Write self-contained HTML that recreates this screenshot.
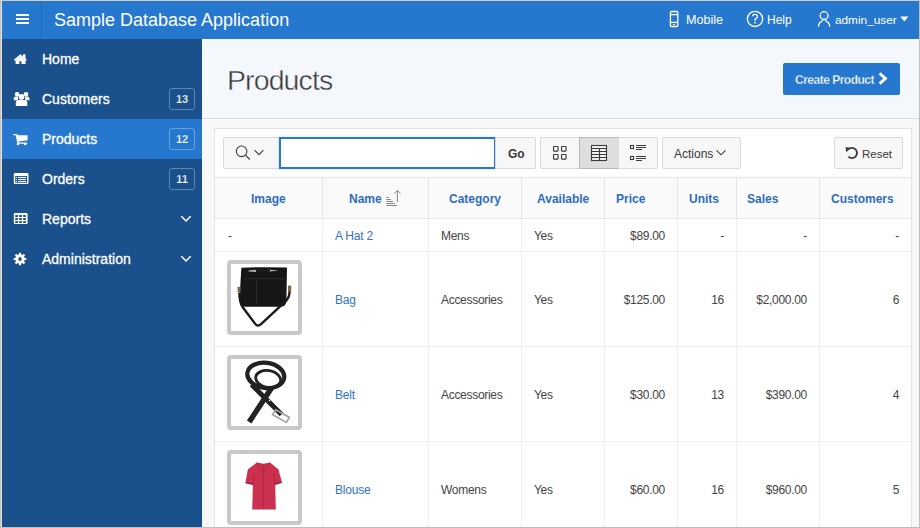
<!DOCTYPE html>
<html><head><meta charset="utf-8">
<style>
*{box-sizing:border-box;margin:0;padding:0}
html,body{width:920px;height:528px;overflow:hidden;background:#f8f8f8;font-family:"Liberation Sans",sans-serif;position:relative}
div,span,svg{position:absolute}
.t{white-space:nowrap;line-height:14px}
#hdr{left:2px;top:1px;width:917px;height:38px;background:#2678cf}
#burger{left:41px;top:1px;width:1px;height:38px;background:#1f69b9}
.bar{left:16px;width:12.5px;height:2px;background:#fff}
#side{left:2px;top:39px;width:200px;height:488px;background:#1a508c}
.sel{left:2px;top:119px;width:200px;height:40px;background:#2678cf}
.lbl{left:42px;color:#fff;font-size:14px;-webkit-text-stroke:0.3px #fff}
.badge{left:169px;width:26px;height:22px;border:1px solid rgba(255,255,255,.3);border-radius:3px;font-size:11px;font-weight:bold;text-align:center;line-height:20px;color:#fff}
#titlebar{left:202px;top:39px;width:717px;height:79px;background:#f4f8fd}
#tbline{left:202px;top:118px;width:717px;height:1px;background:#d9dadd}
#region{left:214px;top:128px;width:698px;height:400px;background:#fff;border:1px solid #e3e3e3}
.btn{top:137px;height:32px;background:#f7f7f7;border:1px solid #dadada;border-radius:2px}
.hl{height:1px;background:#efefef}
.vl{width:1px;background:#e8e8e8}
.th{color:#2e6dbe;font-weight:bold;font-size:12px}
.td{color:#444;font-size:12px;letter-spacing:-0.3px}
.lnk{color:#3472c2;font-size:12px;letter-spacing:-0.2px}
.img{width:75px;height:75px;border:4px solid #c8c8c8;border-radius:4px;background:#fff;left:227px}
</style></head><body>
<!-- header -->
<div id="hdr"></div>
<div id="burger"></div>
<div class="bar" style="top:14px"></div><div class="bar" style="top:18px"></div><div class="bar" style="top:22px"></div>
<div class="t" style="left:54px;top:11px;font-size:18px;line-height:18px;color:#fff">Sample Database Application</div>
<div class="t" style="left:686px;top:13px;font-size:12.6px;color:#fff">Mobile</div>
<div class="t" style="left:767px;top:13px;font-size:12px;color:#fff">Help</div>
<div class="t" style="left:835px;top:13px;font-size:11.8px;color:#fff">admin_user</div>

<!-- side -->
<div id="side"></div>
<div class="sel"></div>
<div class="t lbl" style="top:52px">Home</div>
<div class="t lbl" style="top:92px">Customers</div>
<div class="t lbl" style="top:132px">Products</div>
<div class="t lbl" style="top:172px">Orders</div>
<div class="t lbl" style="top:212px">Reports</div>
<div class="t lbl" style="top:252px">Administration</div>
<div class="badge" style="top:88px;-webkit-text-stroke:0.25px #1a508c">13</div>
<div class="badge" style="top:128px;-webkit-text-stroke:0.25px #2678cf">12</div>
<div class="badge" style="top:168px;-webkit-text-stroke:0.25px #1a508c">11</div>

<!-- title -->
<div id="titlebar"></div><div id="tbline"></div>
<div class="t" style="left:227px;top:64px;font-size:28.5px;line-height:32px;letter-spacing:-0.9px;color:#383838;-webkit-text-stroke:0.45px #f4f8fd">Products</div>
<div style="left:783px;top:63px;width:117px;height:32px;background:#2678cf;border-radius:2px"></div>
<div class="t" style="left:795px;top:73px;font-size:12px;color:#fff;font-weight:bold;letter-spacing:-0.5px;-webkit-text-stroke:0.3px #2678cf">Create Product</div>

<!-- region -->
<div id="region"></div>
<div class="btn" style="left:223px;width:57px"></div>
<div style="left:279px;top:137px;width:217px;height:32px;border:2px solid #2678cf;background:#fff;box-shadow:0 0 2px 1px rgba(38,120,207,.12)"></div>
<div class="btn" style="left:495px;width:41px;border-radius:0 2px 2px 0"></div>
<div class="t" style="left:508px;top:147px;font-size:12px;font-weight:bold;color:#383838">Go</div>
<div class="btn" style="left:540px;width:40px;border-radius:2px 0 0 2px"></div>
<div class="btn" style="left:579px;width:40px;border-radius:0;background:#dedede;border-color:#b8b8b8"></div>
<div class="btn" style="left:618px;width:40px;border-radius:0 2px 2px 0"></div>
<div class="btn" style="left:662px;width:79px"></div>
<div class="t" style="left:674px;top:147px;font-size:12px;color:#383838">Actions</div>
<div class="btn" style="left:834px;width:69px"></div>
<div class="t" style="left:862px;top:147px;font-size:11.5px;color:#383838">Reset</div>

<!-- table -->
<div style="left:215px;top:178px;width:696px;height:40px;background:#fafafa"></div>
<div class="hl" style="left:215px;top:177px;width:696px;background:#e3e3e3"></div>
<div class="hl" style="left:215px;top:218px;width:696px;background:#eaeaea"></div>
<div class="hl" style="left:215px;top:251px;width:696px"></div>
<div class="hl" style="left:215px;top:346px;width:696px"></div>
<div class="hl" style="left:215px;top:441px;width:696px"></div>
<div class="vl" style="left:322px;top:178px;height:40px;background:#e4e4e4"></div><div class="vl" style="left:428px;top:178px;height:40px;background:#e4e4e4"></div><div class="vl" style="left:521px;top:178px;height:40px;background:#e4e4e4"></div><div class="vl" style="left:604px;top:178px;height:40px;background:#e4e4e4"></div><div class="vl" style="left:677px;top:178px;height:40px;background:#e4e4e4"></div><div class="vl" style="left:736px;top:178px;height:40px;background:#e4e4e4"></div><div class="vl" style="left:819px;top:178px;height:40px;background:#e4e4e4"></div><div class="vl" style="left:322px;top:219px;height:308px;background:#efefef"></div><div class="vl" style="left:428px;top:219px;height:308px;background:#efefef"></div><div class="vl" style="left:521px;top:219px;height:308px;background:#efefef"></div><div class="vl" style="left:604px;top:219px;height:308px;background:#efefef"></div><div class="vl" style="left:677px;top:219px;height:308px;background:#efefef"></div><div class="vl" style="left:736px;top:219px;height:308px;background:#efefef"></div><div class="vl" style="left:819px;top:219px;height:308px;background:#efefef"></div>

<div class="t th" style="left:251px;top:192px">Image</div>
<div class="t th" style="left:349px;top:192px">Name</div>
<div class="t th" style="left:449px;top:192px">Category</div>
<div class="t th" style="left:537px;top:192px">Available</div>
<div class="t th" style="left:616px;top:192px">Price</div>
<div class="t th" style="left:689px;top:192px">Units</div>
<div class="t th" style="left:747px;top:192px">Sales</div>
<div class="t th" style="left:831px;top:192px">Customers</div>

<!-- row1 -->
<div class="t td" style="left:228px;top:229px">-</div>
<div class="t lnk" style="left:335px;top:229px">A Hat 2</div>
<div class="t td" style="left:441px;top:229px">Mens</div>
<div class="t td" style="left:534px;top:229px">Yes</div>
<div class="t td" style="right:255px;top:229px">$89.00</div>
<div class="t td" style="right:196px;top:229px">-</div>
<div class="t td" style="right:113px;top:229px">-</div>
<div class="t td" style="right:21px;top:229px">-</div>
<!-- row2 -->
<div class="img" style="top:260px"></div>
<div class="t lnk" style="left:335px;top:293px">Bag</div>
<div class="t td" style="left:441px;top:293px">Accessories</div>
<div class="t td" style="left:534px;top:293px">Yes</div>
<div class="t td" style="right:255px;top:293px">$125.00</div>
<div class="t td" style="right:196px;top:293px">16</div>
<div class="t td" style="right:113px;top:293px">$2,000.00</div>
<div class="t td" style="right:21px;top:293px">6</div>
<!-- row3 -->
<div class="img" style="top:355px"></div>
<div class="t lnk" style="left:335px;top:388px">Belt</div>
<div class="t td" style="left:441px;top:388px">Accessories</div>
<div class="t td" style="left:534px;top:388px">Yes</div>
<div class="t td" style="right:255px;top:388px">$30.00</div>
<div class="t td" style="right:196px;top:388px">13</div>
<div class="t td" style="right:113px;top:388px">$390.00</div>
<div class="t td" style="right:21px;top:388px">4</div>
<!-- row4 -->
<div class="img" style="top:450px"></div>
<div class="t lnk" style="left:335px;top:483px">Blouse</div>
<div class="t td" style="left:441px;top:483px">Womens</div>
<div class="t td" style="left:534px;top:483px">Yes</div>
<div class="t td" style="right:255px;top:483px">$60.00</div>
<div class="t td" style="right:196px;top:483px">16</div>
<div class="t td" style="right:113px;top:483px">$960.00</div>
<div class="t td" style="right:21px;top:483px">5</div>

<svg style="left:0;top:0" width="920" height="528" viewBox="0 0 920 528">
<!-- sidebar icons -->
<g fill="#fff">
  <!-- home -->
  <path d="M13.8 59.8 L20.3 54.2 L26.9 59.8 L25.6 60.9 L20.3 56.4 L15.1 60.9 Z"/>
  <path d="M22.9 54.2 h2.6 v4.8 l-2.6 -2.3 z"/>
  <path d="M15.6 60.4 L20.3 56.6 L25.6 60.6 V64 H21.4 V61.2 H19.4 V64 H15.6 Z"/>
  <!-- users -->
  <circle cx="17.1" cy="94.2" r="2.3"/>
  <circle cx="26" cy="94.2" r="2.3"/>
  <circle cx="21.5" cy="96.9" r="2.8"/>
  <path d="M13.8 100.3 v-2.3 q0-1.6 1.6-1.6 h3 q-0.8 1.4 -0.4 3.9 z"/>
  <path d="M29.4 100.3 v-2.3 q0-1.6 -1.6-1.6 h-3 q0.8 1.4 0.4 3.9 z"/>
  <path d="M15.8 106 v-3.2 q0-2.8 2.8-2.8 h5.9 q2.8 0 2.8 2.8 v3.2 z"/>
  <!-- cart -->
  <path d="M13.3 134 h3.8 l0.5 1.2 h10 v5 l-9.2 1.4 l0.3 0.9 h8.6 v1.3 h-9.8 l-1.9 -8.5 h-2.3 z"/>
  <rect x="16.8" y="143.2" width="2.3" height="1.9"/>
  <rect x="24" y="143.2" width="2.3" height="1.9"/>
  <!-- orders list-alt -->
  <path fill-rule="evenodd" d="M15 173 h12.3 q1.2 0 1.2 1.2 v8.6 q0 1.2 -1.2 1.2 h-12.3 q-1.2 0 -1.2 -1.2 v-8.6 q0 -1.2 1.2 -1.2 z M15.2 176 v6.8 h11.9 v-6.8 z"/>
  <rect x="15.8" y="176.9" width="1.2" height="1"/><rect x="18" y="176.9" width="8" height="1"/>
  <rect x="15.8" y="178.9" width="1.2" height="1"/><rect x="18" y="178.9" width="8" height="1"/>
  <rect x="15.8" y="180.9" width="1.2" height="1"/><rect x="18" y="180.9" width="8" height="1"/>
  <!-- reports table -->
  <path fill-rule="evenodd" d="M14.9 213.1 h11.6 q1.1 0 1.1 1.1 v8.7 q0 1.1 -1.1 1.1 h-11.6 q-1.1 0 -1.1 -1.1 v-8.7 q0 -1.1 1.1 -1.1 z
   M15.3 215 h2.6 v2 h-2.6z M19.2 215 h2.6 v2 h-2.6z M23.2 215 h2.6 v2 h-2.6z
   M15.3 218 h2.6 v2 h-2.6z M19.2 218 h2.6 v2 h-2.6z M23.2 218 h2.6 v2 h-2.6z
   M15.3 221 h2.6 v2 h-2.6z M19.2 221 h2.6 v2 h-2.6z M23.2 221 h2.6 v2 h-2.6z"/>
  <!-- cog -->
  <path fill-rule="evenodd" d="M18.88 254.33 L19.00 252.68 L21.00 252.68 L21.12 254.33 L22.51 254.91 L23.76 253.82 L25.18 255.24 L24.09 256.49 L24.67 257.88 L26.32 258.00 L26.32 260.00 L24.67 260.12 L24.09 261.51 L25.18 262.76 L23.76 264.18 L22.51 263.09 L21.12 263.67 L21.00 265.32 L19.00 265.32 L18.88 263.67 L17.49 263.09 L16.24 264.18 L14.82 262.76 L15.91 261.51 L15.33 260.12 L13.68 260.00 L13.68 258.00 L15.33 257.88 L15.91 256.49 L14.82 255.24 L16.24 253.82 L17.49 254.91 Z M21.70 259 A1.7 2 0 1 0 18.30 259 A1.7 2 0 1 0 21.70 259 Z"/>
  <!-- chevrons -->
</g>
<g fill="none" stroke="#fff" stroke-width="1.5">
  <path d="M181.3 216.3 L186 221 L190.7 216.3"/>
  <path d="M181.3 256.3 L186 261 L190.7 256.3"/>
</g>
<!-- header icons -->
<g fill="none" stroke="#fff" stroke-width="1.3">
  <rect x="670.4" y="11.5" width="7.4" height="15" rx="1"/>
  <line x1="670.4" y1="14.6" x2="677.8" y2="14.6"/>
  <line x1="670.4" y1="22.4" x2="677.8" y2="22.4"/>
  <circle cx="755" cy="18.9" r="7.6"/>
  <circle cx="824.1" cy="15.6" r="3.9"/>
  <path d="M818.5 26.8 Q818.4 22.6 821.8 21.3 L822.9 19.9 M829.7 26.8 Q829.8 22.6 826.4 21.3 L825.3 19.9"/>
  <path d="M752.6 16.3 q0.2 -1.9 2.4 -1.9 q2.4 0 2.4 2 q0 1.3 -1.3 2 q-1.1 0.6 -1.1 1.8 v0.8"/>
</g>
<rect x="673.2" y="24" width="1.8" height="1" fill="#fff"/>
<rect x="754.2" y="22" width="1.6" height="1.5" fill="#fff"/>
<path d="M900.2 16.6 h8.2 l-4.1 5 z" fill="#fff"/>
<path d="M879.6 73.4 L885.4 78.5 L879.6 83.6" fill="none" stroke="#fff" stroke-width="2.9"/>
<!-- toolbar icons -->
<g fill="none" stroke="#3a3a3a" stroke-width="1.1">
  <circle cx="241.6" cy="151.3" r="5.3"/>
  <path d="M245.5 155.2 L249.8 159.5"/>
  <path d="M254.6 150.2 L259 154.6 L263.4 150.2"/>
  <rect x="553.5" y="146.5" width="4.6" height="4.6" rx="0.6"/>
  <rect x="561.5" y="146.5" width="4.6" height="4.6" rx="0.6"/>
  <rect x="553.5" y="154.5" width="4.6" height="4.6" rx="0.6"/>
  <rect x="561.5" y="154.5" width="4.6" height="4.6" rx="0.6"/>
  <rect x="591.5" y="145.5" width="15" height="15" fill="#f2f2f2"/>
  <path d="M591.5 148.5 h15 M591.5 151.5 h15 M591.5 154.5 h15 M591.5 157.5 h15 M599.5 148.5 v12"/>
  <rect x="630.5" y="145.5" width="3" height="3"/>
  <rect x="630.5" y="156.5" width="3" height="3"/>
  <path d="M636 145.5 h10 M636 147.5 h10 M636 149.5 h6 M636 156.5 h10 M636 158.5 h10 M636 160.5 h6"/>
  <path d="M716.5 150.3 L721 154.8 L725.5 150.3"/>
  <path d="M848.3 149.4 A5.1 5.1 0 1 1 848.3 156.6" stroke-width="1.9"/>
</g>
<path d="M845.6 147.1 L850.6 147.9 L846.2 152.2 Z" fill="#3a3a3a"/>
<g stroke="#85858f" stroke-width="1" fill="none">
  <path d="M386.3 197.5 h2.5 M386.3 199.5 h4.6 M386.3 201.5 h6.7 M386.3 203.5 h8.6 M386.3 205.5 h10.7"/>
  <path d="M397.4 190.5 V202 M394.2 193.7 L397.4 190.5 L400.6 193.7"/>
</g>

<!-- product images -->
<g>
  <path d="M241.4 267.8 Q264 266.6 287 267.6 L286.4 301 Q286.2 306.5 281 306.8 L245 306.8 Q240 306.6 239.8 301 L240 290 Z" fill="#161616"/>
  <path d="M248.5 270.6 Q263 268.6 278.5 270.4 Q263 272.8 248.5 271.6 Z" fill="#b0b0b0"/><path d="M256 269.6 Q263 268 270 269.6 L270 271.8 Q263 272.6 256 272 Z" fill="#1a1a1a"/>
  <path d="M244 279 Q264 277.6 284 279 M256.5 280 L256.5 304" stroke="#333" stroke-width="0.7" fill="none"/>
  <path d="M239.4 293 Q239.4 302 242.6 307 L255 323.6 Q257.6 327 260.8 324.4 L286 301 Q289.6 297 289.6 291" stroke="#1a1a1a" stroke-width="2.4" fill="none"/>
  <rect x="237.6" y="286.8" width="3" height="6" fill="#7a6640"/>
  <rect x="288" y="285.6" width="3.2" height="6" fill="#7a6640"/>
</g>
<g fill="none" stroke="#222">
  <path d="M271.5 388 L249.2 422" stroke-width="5.4"/>
  <path d="M251.5 384.5 L281.5 414.5" stroke-width="5"/>
  <ellipse cx="265.8" cy="375.4" rx="18.6" ry="12.6" stroke-width="4.2" transform="rotate(8 265.8 375.4)"/>
  <ellipse cx="268.2" cy="379" rx="12.6" ry="8.4" stroke-width="2.8" transform="rotate(10 268.2 379)"/>
</g>
<circle cx="269.5" cy="400.5" r="0.8" fill="#ddd"/>
<path d="M275.6 409.8 L289.4 417.4 L286.4 422.4 L272.6 414.8 Z" fill="none" stroke="#a4a4a4" stroke-width="1.7"/>
<path d="M256.9 462.6 L263.5 463.8 L270 462.6 L278.5 469.6 L281.9 482.2 L275.2 484.4 L275.8 509.4 L252.2 509.4 L252.9 484.4 L245.5 482.6 L247.8 469.6 Z" fill="#cc3050"/>
<path d="M263.6 464 L263.6 509 M256.9 462.6 L263.6 472.5 L270 462.6 M252.9 484.4 L254.4 473 M275.2 484.4 L273.6 473" stroke="#a8223f" stroke-width="0.8" fill="none"/>
<path d="M245.5 482.6 L252.9 484.4 M281.9 482.2 L275.2 484.4" stroke="#8e1a33" stroke-width="1.2" fill="none"/>
</svg>
<!-- frame -->
<div style="left:0;top:0;width:1px;height:528px;background:#c3c3c3"></div>
<div style="left:1px;top:0;width:1px;height:528px;background:#e5e3df"></div>
<div style="left:0;top:0;width:920px;height:1px;background:#d6ccc0"></div>
<div style="left:919px;top:0;width:1px;height:528px;background:#bdbdbd"></div>
<div style="left:0;top:527px;width:920px;height:1px;background:#bdbdbd"></div>

</body></html>
